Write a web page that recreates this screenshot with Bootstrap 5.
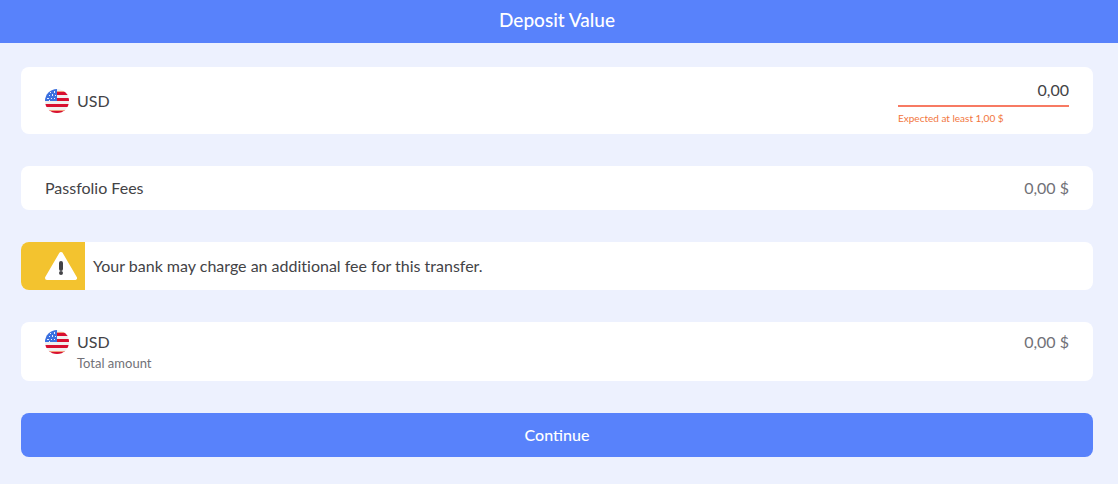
<!DOCTYPE html>
<html lang="en">
<head>
<meta charset="utf-8">
<meta name="viewport" content="width=device-width, initial-scale=1">
<title>Deposit Value</title>
<link href="https://cdn.jsdelivr.net/npm/bootstrap@5.3.0/dist/css/bootstrap.min.css" rel="stylesheet">
<style>
  body { font-family: Lato, sans-serif; font-size: 16px; line-height: 24px; color: #434346; background: #edf1fe; font-variant-ligatures: none; }
  .topbar { background: #5882fb; height: 43px; padding: 0 25px 4px 21px; }
  .topbar h1 { font-size: 19px; line-height: 24px; font-weight: 500; }
  .deposit { padding: 24px 25px 27px 21px; gap: 32px; }
  .panel { background: #fff; border-radius: 8px; }
  .flag { width: 24px; height: 24px; }
  .amount-field { width: 171px; }
  .amount-field input { height: 29px; padding: 0 0 4px; color: #434346; border-bottom: 2px solid #f77a63; outline: 0; }
  .amount-field .hint { font-size: 10px; line-height: 12px; color: #f2763e; margin-top: 5px; }
  .amount-row { padding: 11px 24px 10px; }
  .amount-row label { margin-bottom: 1px; }
  .fee-row { padding: 10px 24px; }
  .soft { color: #717177; }
  .caption { font-size: 13px; line-height: 19px; }
  .warn { width: 64px; background: #f3c32f; border-radius: 8px 0 0 8px; }
  .btn-continue { --bs-btn-bg: #5882fb; --bs-btn-color: #fff; --bs-btn-hover-bg: #4773f2; --bs-btn-hover-color: #fff; --bs-btn-active-bg: #3d68e4; --bs-btn-active-color: #fff; --bs-btn-border-width: 0; --bs-btn-border-radius: 8px; --bs-btn-font-weight: 500; height: 44px; }
</style>
</head>
<body>
<svg width="0" height="0" class="position-absolute" aria-hidden="true">
  <symbol id="us-flag" viewBox="0 0 24 24">
    <clipPath id="disc"><circle cx="12" cy="12" r="12"/></clipPath>
    <g clip-path="url(#disc)">
      <path fill="#f0f0f0" d="M0 0h24v24H0z"/>
      <path fill="#d80f30" d="M12 3h12v3H12zM12 9h12v3H12zM0 15h24v3H0zM0 21h24v3H0z"/>
      <path fill="#f3a07c" d="M12 2h12v1H12zM0 21h24v1H0z"/>
      <path fill="#3b70e0" d="M0 0h12v12H0z"/>
      <path fill="#e8efff" d="M5 3h1v1H5zM9 2h1v2H9zM4 6h1v1H4zM7 5h1v2H7zM10 6h1v1h-1zM2 9h2v1H2zM6 9h1v1H6zM9 9h1v1H9zM4 11h1v1H4z"/>
    </g>
  </symbol>
</svg>
<header class="topbar d-flex align-items-center justify-content-center text-white">
  <h1 class="m-0">Deposit Value</h1>
</header>
<main>
  <form class="deposit d-flex flex-column">
    <section class="panel amount-row d-flex align-items-center justify-content-between">
      <label for="amount" class="d-flex align-items-center gap-2">
        <svg class="flag" aria-hidden="true"><use href="#us-flag"/></svg>USD
      </label>
      <div class="amount-field">
        <input id="amount" class="d-block w-100 border-top-0 border-start-0 border-end-0 bg-transparent text-end" type="text" inputmode="decimal" value="0,00" aria-describedby="amount-hint">
        <div id="amount-hint" class="hint">Expected at least 1,00 $</div>
      </div>
    </section>
    <section class="panel fee-row d-flex justify-content-between">
      <span>Passfolio Fees</span>
      <span class="soft">0,00 $</span>
    </section>
    <section class="panel d-flex align-items-stretch">
      <div class="warn d-flex justify-content-end p-2">
        <svg width="32" height="32" viewBox="0 0 32 32" aria-hidden="true">
          <path fill="#fff" stroke="#fff" stroke-width="4" stroke-linejoin="round" d="M16 4 30 28H2z"/>
          <path fill="none" stroke="#434346" stroke-width="4" stroke-linecap="round" d="M16 13v6M16 23v.1"/>
        </svg>
      </div>
      <span class="align-self-center px-2">Your bank may charge an additional fee for this transfer.</span>
    </section>
    <section class="panel d-flex justify-content-between px-4 py-2">
      <div class="d-flex gap-2">
        <svg class="flag" aria-hidden="true"><use href="#us-flag"/></svg>
        <div>USD<div class="caption soft">Total amount</div></div>
      </div>
      <span class="soft">0,00 $</span>
    </section>
    <button type="submit" class="btn btn-continue w-100">Continue</button>
  </form>
</main>
<script src="https://cdn.jsdelivr.net/npm/bootstrap@5.3.0/dist/js/bootstrap.bundle.min.js"></script>
</body>
</html>
